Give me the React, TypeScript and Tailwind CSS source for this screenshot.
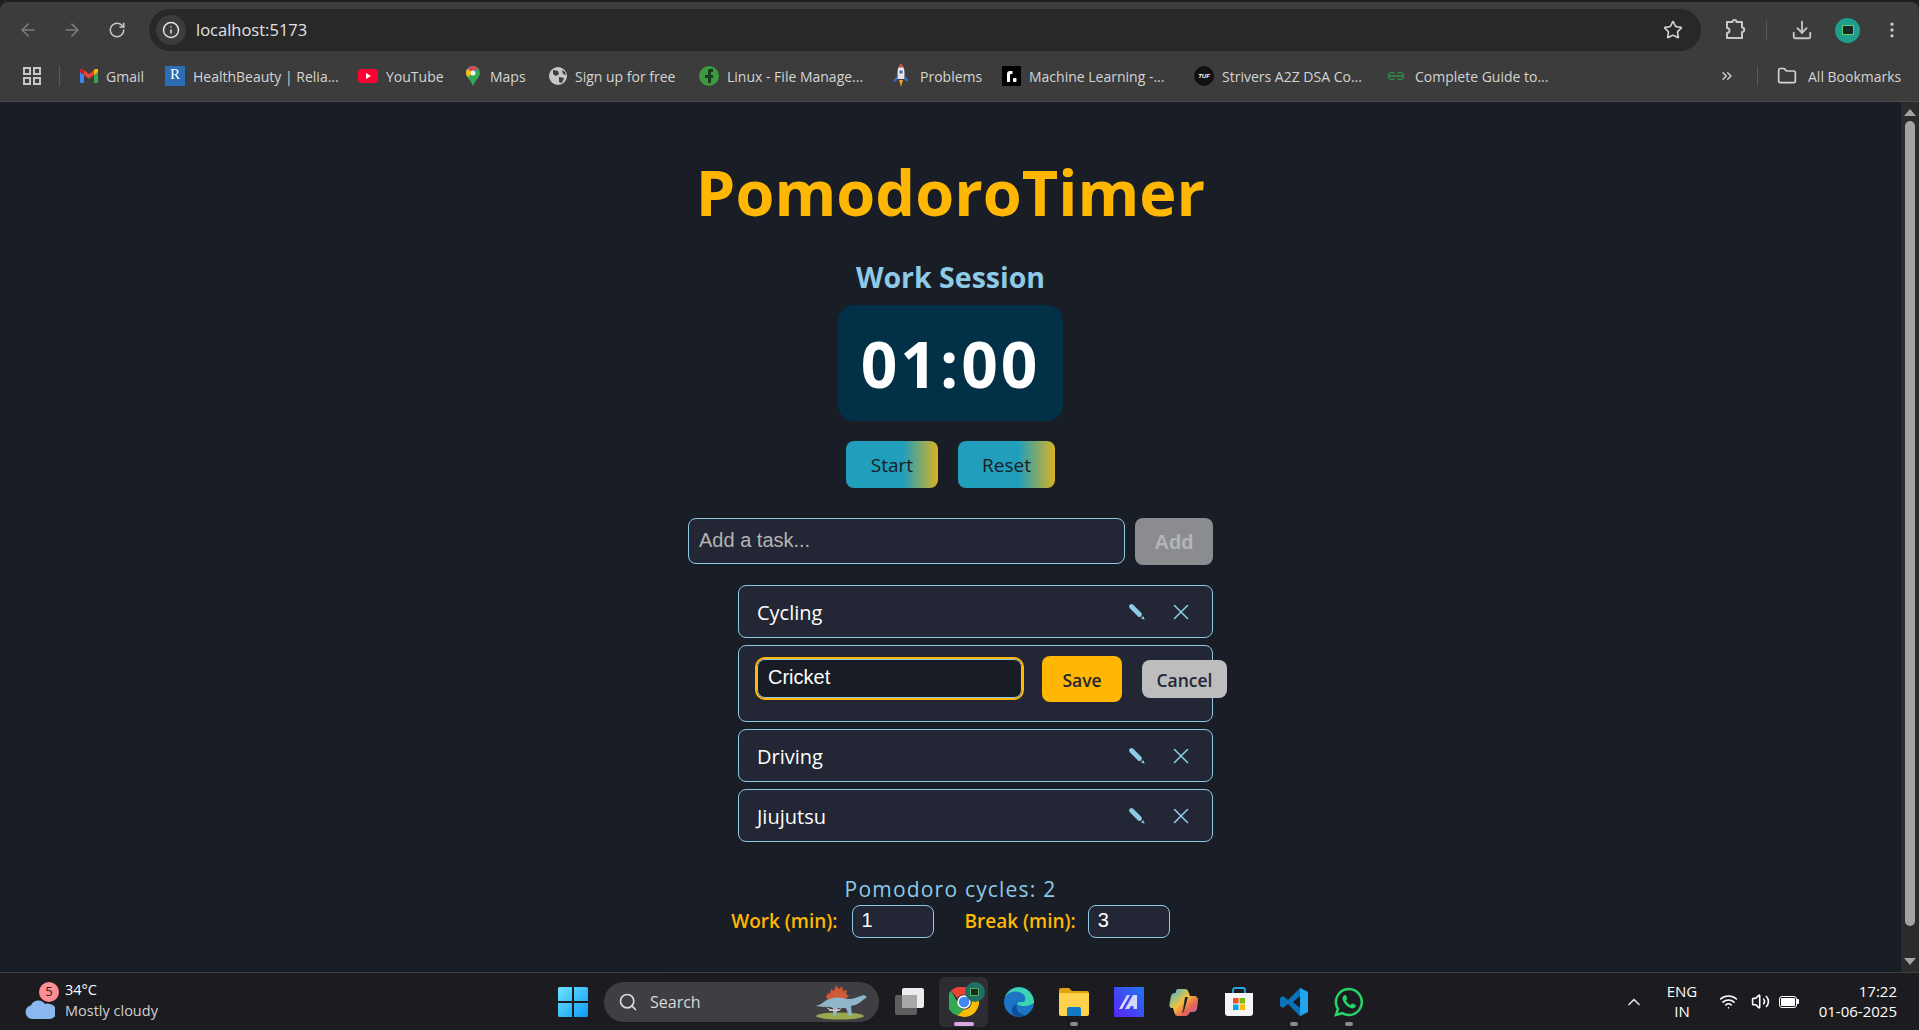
import { ArrowLeft, ArrowRight, RotateCw, Info, Star, Download, MoreVertical, ChevronsRight, Folder, Search, ChevronUp, Wifi, Volume2, X } from "lucide-react";

const ui = "font-['Open_Sans',sans-serif]";

const GmailIcon = () => (
	<svg width="18" height="14" viewBox="0 0 18 14">
		<path d="M0 3v9.5A1.5 1.5 0 0 0 1.5 14H4V6z" fill="#4285f4" />
		<path d="M14 6v8h2.500A1.500 1.500 0 0 0 18 12.500V3z" fill="#34a853" />
		<path d="M4 6V1L9 5l5-4v5L9 9.800z" fill="#ea4335" />
		<path d="M0 3l4 3V1L2.400 0A1.500 1.500 0 0 0 0 1.500z" fill="#c5221f" />
		<path d="M18 3l-4 3V1l1.600-1A1.500 1.500 0 0 1 18 1.500z" fill="#fbbc04" />
	</svg>
);

const RelianceIcon = () => (
	<div className="w-5 h-5 bg-[#2a6fb5] flex items-start justify-center text-white text-[15px] leading-[16px] font-['Liberation_Serif',serif]">R</div>
);

const YoutubeIcon = () => (
	<svg width="20" height="14" viewBox="0 0 20 14">
		<rect width="20" height="14" rx="3.500" fill="#ff0033" />
		<path d="M8 4l5 3-5 3z" fill="#fff" />
	</svg>
);

const MapsIcon = () => (
	<svg width="14" height="20" viewBox="0 0 14 20">
		<path d="M7 0a7 7 0 0 1 7 7c0 4-4 6-7 13C4 13 0 11 0 7a7 7 0 0 1 7-7z" fill="#34a853" />
		<path d="M7 0a7 7 0 0 1 5.500 2.700L2 11C.6 9.700 0 8.500 0 7a7 7 0 0 1 7-7z" fill="#4285f4" />
		<path d="M1.500 2.700L7 7 2 11C.6 9.700 0 8.500 0 7c0-1.700.6-3.100 1.500-4.300z" fill="#fbbc04" />
		<path d="M7 0a7 7 0 0 0-5.500 2.700L5 5.500l7.500-2.800A7 7 0 0 0 7 0z" fill="#ea4335" opacity=".85" />
		<circle cx="7" cy="7" r="2.500" fill="#fff" opacity=".9" />
	</svg>
);

const GlobeIcon = () => (
	<svg width="18" height="18" viewBox="0 0 18 18">
		<circle cx="9" cy="9" r="9" fill="#c7c7c7" />
		<path d="M4 3l5 1 1 3-3 2-3-2zM10 10l5 1-2 5-3-1zM13 3l3 2 1 3-3-1z" fill="#3c3c3c" />
	</svg>
);

const LinuxIcon = () => (
	<svg width="20" height="20" viewBox="0 0 20 20">
		<circle cx="10" cy="10" r="10" fill="#3d9a41" />
		<path d="M10 3h4v3h-2v3h2v3h-2v5H9v-5H6V9h3V5a2 2 0 0 1 1-2z" fill="#1c3a1e" />
	</svg>
);

const RocketIcon = () => (
	<svg width="14" height="24" viewBox="0 0 14 24">
		<path d="M7 0c3 3 3.500 6 3.500 9v6h-7V9C3.500 6 4 3 7 0z" fill="#e6e6e6" />
		<path d="M7 0c1 1 1.800 2.200 2.400 3.500H4.600C5.200 2.200 6 1 7 0z" fill="#d9412f" />
		<circle cx="7" cy="8" r="1.800" fill="#3b6fc4" />
		<path d="M3.500 11L0 16v2l3.500-2zM10.500 11L14 16v2l-3.500-2z" fill="#3b6fc4" />
		<path d="M5 16h4l-2 7z" fill="#f59a23" />
	</svg>
);

const MlIcon = () => (
	<div className="w-[19px] h-5 bg-black flex items-center justify-center">
		<svg width="11" height="12" viewBox="0 0 11 12">
			<path d="M1 12V4q0-3 3-3h2.500v3H5q-1 0-1 1v7z" fill="#fff" />
			<rect x="7" y="8" width="3.500" height="4" rx="1" fill="#fff" />
		</svg>
	</div>
);

const TufIcon = () => (
	<div className="w-5 h-5 rounded-full bg-[#111] flex items-center justify-center text-white text-[6px] font-bold italic font-['Liberation_Sans',sans-serif]">TUF</div>
);

const GfgIcon = () => (
	<svg width="18" height="10" viewBox="0 0 18 10" fill="none" stroke="#2f8d46" strokeWidth="1.400">
		<path d="M9 5H1.500a3.500 3.500 0 0 1 6-2.500M9 5h7.500a3.500 3.500 0 0 0-6-2.500" />
		<path d="M1.500 5a3.500 3.500 0 0 0 6 2.500M16.500 5a3.500 3.500 0 0 1-6 2.500" />
	</svg>
);

const AppsIcon = () => (
	<svg width="18" height="18" viewBox="0 0 18 18" fill="none" stroke="#c7c7c7" strokeWidth="2">
		<rect x="1" y="1" width="6" height="6" />
		<rect x="11" y="1" width="6" height="6" />
		<rect x="1" y="11" width="6" height="6" />
		<rect x="11" y="11" width="6" height="6" />
	</svg>
);

const PuzzleIcon = () => (
	<svg width="22" height="22" viewBox="0 0 22 22" fill="none" stroke="#c7c7c7" strokeWidth="2" strokeLinejoin="round">
		<path d="M3 3h5.500a2 2 0 0 1 4 0H18v5.500a2.200 2.200 0 0 1 0 4.400V19H3v-5a2.500 2.500 0 0 0 0-5z" />
	</svg>
);

const bookmarks = [
	{ label: "Gmail", icon: <GmailIcon />, box: "w-[85px]", gap: "gap-2" },
	{ label: "HealthBeauty | Relia...", icon: <RelianceIcon />, box: "w-[193px]", gap: "gap-2" },
	{ label: "YouTube", icon: <YoutubeIcon />, box: "w-[108px]", gap: "gap-2" },
	{ label: "Maps", icon: <MapsIcon />, box: "w-[83px]", gap: "gap-[10px]" },
	{ label: "Sign up for free", icon: <GlobeIcon />, box: "w-[150px]", gap: "gap-2" },
	{ label: "Linux - File Manage...", icon: <LinuxIcon />, box: "w-[195px]", gap: "gap-2" },
	{ label: "Problems", icon: <RocketIcon />, box: "w-[108px]", gap: "gap-3" },
	{ label: "Machine Learning -...", icon: <MlIcon />, box: "w-[192px]", gap: "gap-2" },
	{ label: "Strivers A2Z DSA Co...", icon: <TufIcon />, box: "w-[193px]", gap: "gap-2" },
	{ label: "Complete Guide to...", icon: <GfgIcon />, box: "w-[170px]", gap: "gap-[10px]" },
];

const BrowserChrome = () => (
	<div className={`${ui} h-[102px] shrink-0 bg-[#1f1f1f] pt-[2px]`}>
		<div className="h-[100px] bg-[#3c3c3c] rounded-t-[8px] border-b border-[#4a4a4a]">
			<div className="h-[52px] flex items-center pt-[4px] text-[#c7c7c7]">
				<ArrowLeft size={20} className="ml-[18px] text-[#7a7a7a]" />
				<ArrowRight size={20} className="ml-[24px] text-[#7a7a7a]" />
				<RotateCw size={18} className="ml-[26px]" />
				<div className="ml-[23px] w-[1552px] h-[42px] rounded-full bg-[#282828] flex items-center pl-[7px]">
					<div className="w-[30px] h-[30px] rounded-full bg-[#3c3c3c] flex items-center justify-center">
						<Info size={18} className="text-[#e3e3e3]" />
					</div>
					<span className="ml-[10px] text-[16.500px] text-[#e3e3e3]">localhost:5173</span>
					<Star size={20} className="ml-auto mr-[18px] text-[#d0d0d0]" />
				</div>
				<div className="ml-[23px]"><PuzzleIcon /></div>
				<div className="ml-[20px] w-[1px] h-5 bg-[#5a5a5a]" />
				<Download size={22} className="ml-[24px]" />
				<div className="ml-[22px] w-[25px] h-[25px] rounded-full bg-[#1f9e8d] flex items-center justify-center">
					<div className="w-[12px] h-[10px] bg-[#1b2a26] border border-[#5fcf6a]" />
				</div>
				<MoreVertical size={20} className="ml-[22px]" />
			</div>
			<div className="h-[44px] flex items-center text-[14px] text-[#d4d4d4]">
				<div className="ml-[23px]"><AppsIcon /></div>
				<div className="ml-[18px] mr-[20px] w-[1px] h-5 bg-[#5a5a5a]" />
				{bookmarks.map((b) => (
					<div key={b.label} className={`${b.box} ${b.gap} flex items-center shrink-0 whitespace-nowrap`}>
						{b.icon}
						<span>{b.label}</span>
					</div>
				))}
				<ChevronsRight size={16} className="ml-[162px] text-[#d4d4d4]" />
				<div className="ml-[22px] w-[1px] h-5 bg-[#5a5a5a]" />
				<Folder size={20} className="ml-[19px]" />
				<span className="ml-[11px] whitespace-nowrap">All Bookmarks</span>
			</div>
		</div>
	</div>
);

const PencilGlyph = () => (
	<svg width="18" height="18" viewBox="0 0 18 18" className="shrink-0">
		<path d="M3.500 3.500L11.500 11.500" stroke="#8ecae6" strokeWidth="4.800" strokeLinecap="round" fill="none" />
		<path d="M13 15.200l2.200-2.200 1.500 3.700z" fill="#8ecae6" />
	</svg>
);

const TaskRow = ({ name }: { name: string }) => (
	<li className="flex items-center h-[53px] rounded-[8px] border border-[#8ecae6] bg-[#232735] pl-[18px] pr-[18px]">
		<span className="pt-[2px] text-[20px] text-white flex-1">{name}</span>
		<PencilGlyph />
		<X size={26} strokeWidth={1.400} className="ml-[22px] text-[#8ecae6]" />
	</li>
);

const EditRow = () => (
	<li className="flex items-start h-[77px] rounded-[8px] border border-[#8ecae6] bg-[#232735] pl-[18px] pt-[10px]">
		<input
			readOnly
			value="Cricket"
			className="mt-[3px] shrink-0 w-[265px] h-[39px] rounded-[8px] bg-[#181c25] border border-[#8ecae6] outline-2 outline-[#ffb703] px-[10px] pb-[2px] text-[20px] text-white font-['Liberation_Sans',sans-serif]"
		/>
		<button className="ml-[20px] pt-[2px] shrink-0 w-[80px] h-[46px] rounded-[8px] bg-[#ffb703] text-[#232735] text-[17.5px] font-semibold">Save</button>
		<button className="ml-[20px] mt-[4px] pt-[2px] shrink-0 w-[85px] h-[38px] rounded-[8px] bg-[#bdbdbd] text-[#232735] text-[17.5px] font-semibold">Cancel</button>
	</li>
);

const PomodoroPage = () => (
	<div className={`${ui} w-[588px] mx-auto h-full bg-[#191d26] flex flex-col items-center overflow-hidden`}>
		<h1 className="mt-[58px] text-[63px] leading-none font-bold text-[#ffb703] whitespace-nowrap">PomodoroTimer</h1>
		<h2 className="mt-[34px] text-[28.500px] leading-[40px] font-bold text-[#8ecae6]">Work Session</h2>
		<div className="mt-[8px] pt-[2px] w-[225px] h-[116px] rounded-[16px] bg-[#023047] flex items-center justify-center text-[64px] font-bold text-white tracking-[3px]">01:00</div>
		<div className="mt-[20px] flex gap-[20px]">
			<button className="pt-[2px] w-[92px] h-[47px] rounded-[8px] bg-[linear-gradient(90deg,#219ebc_62%,#ffb703_108%)] text-[#181c25] text-[19px] font-medium">Start</button>
			<button className="pt-[2px] w-[97px] h-[47px] rounded-[8px] bg-[linear-gradient(90deg,#219ebc_62%,#ffb703_108%)] text-[#181c25] text-[19px] font-medium">Reset</button>
		</div>
		<div className="mt-[30px] w-[525px] flex gap-[10px]">
			<input
				readOnly
				placeholder="Add a task..."
				className="flex-1 h-[46px] rounded-[8px] border border-[#8ecae6] bg-[#232735] px-[10px] pb-[1px] text-[20px] placeholder:text-[#b4b4b4] font-['Liberation_Sans',sans-serif]"
			/>
			<button className="w-[78px] h-[47px] rounded-[8px] bg-[#8b8c90] text-[#b4b5b8] text-[20px] font-bold font-['Liberation_Sans',sans-serif]">Add</button>
		</div>
		<ul className="mt-[20px] w-[525px] pl-[50px] flex flex-col gap-[7px]">
			<TaskRow name="Cycling" />
			<EditRow />
			<TaskRow name="Driving" />
			<TaskRow name="Jiujutsu" />
		</ul>
		<p className="mt-[34px] text-[21px] leading-[26px] tracking-[1.200px] text-[#8ecae6]">Pomodoro cycles: 2</p>
		<div className="mt-[3px] flex items-center text-[19px] font-semibold text-[#ffb703]">
			<label>Work (min):</label>
			<input readOnly value="1" className="ml-[14px] w-[82px] h-[33px] rounded-[8px] border border-[#8ecae6] bg-[#232735] px-[9px] pb-[2px] text-[20px] font-normal text-white font-['Liberation_Sans',sans-serif]" />
			<label className="ml-[31px]">Break (min):</label>
			<input readOnly value="3" className="ml-[12px] w-[82px] h-[33px] rounded-[8px] border border-[#8ecae6] bg-[#232735] px-[9px] pb-[2px] text-[20px] font-normal text-white font-['Liberation_Sans',sans-serif]" />
		</div>
	</div>
);

const Scrollbar = () => (
	<div className="w-[18px] shrink-0 bg-[#2b2b2b] flex flex-col items-center py-[7px]">
		<div className="w-0 h-0 border-x-[6px] border-x-transparent border-b-[7px] border-b-[#a3a3a3]" />
		<div className="mt-[5px] w-[10px] flex-1 rounded-full bg-[#a3a3a3] mb-[32px]" />
		<div className="w-0 h-0 border-x-[6px] border-x-transparent border-t-[7px] border-t-[#a3a3a3]" />
	</div>
);

const WindowsIcon = () => (
	<svg width="30" height="30" viewBox="0 0 30 30">
		<defs>
			<linearGradient id="win" x1="0" y1="0" x2="1" y2="1">
				<stop offset="0" stopColor="#6fe3ff" />
				<stop offset="1" stopColor="#0a9bf5" />
			</linearGradient>
		</defs>
		<path d="M0 1.500A1.500 1.500 0 0 1 1.500 0H14v14H0zM16 0h12.500A1.500 1.500 0 0 1 30 1.500V14H16zM0 16h14v14H1.500A1.500 1.500 0 0 1 0 28.500zM16 16h14v12.500a1.500 1.500 0 0 1-1.500 1.500H16z" fill="url(#win)" />
	</svg>
);

const DinoIcon = () => (
	<svg width="60" height="36" viewBox="0 0 60 36">
		<ellipse cx="28" cy="32" rx="24" ry="3.500" fill="#9aa84e" />
		<path d="M14 13l2-4 2 1 1-5 3 2 2-6 3 4 3-3 1 5 4-1-1 4 3 2-5 4H16z" fill="#cf5a34" />
		<path d="M4 22q5-1 9-5 8-5 18-3 7 2 12 0l9-3 3 2-4 3q-5 5-12 6l1 10h-3l-3-8-8 0-2 8h-3l0-8q-5-2-9-1z" fill="#8fb5c9" />
		<path d="M14 23q8 5 16 1l-3 3h-9z" fill="#e6c3cf" />
	</svg>
);

const TaskViewIcon = () => (
	<svg width="30" height="30" viewBox="0 0 30 30">
		<rect x="1" y="8" width="22" height="20" rx="2" fill="#5e5e5e" />
		<rect x="8" y="1" width="22" height="20" rx="2" fill="#ececec" />
		<rect x="8" y="8" width="15" height="13" rx="1" fill="#a8a8a8" />
	</svg>
);

const ChromeIcon = () => (
	<div className="relative w-[30px] h-[30px]">
		<svg width="30" height="30" viewBox="0 0 30 30">
			<path d="M15 0a15 15 0 0 1 13 7.500H15a7.500 7.500 0 0 0-6.500 3.750L2 3.800A15 15 0 0 1 15 0z" fill="#ea4335" />
			<path d="M2 3.800l6.500 11.200A7.500 7.500 0 0 0 15 22.500L8.500 28.600A15 15 0 0 1 2 3.800z" fill="#34a853" />
			<path d="M28 7.500A15 15 0 0 1 15 30l-6.500-1.400L15 22.500A7.500 7.500 0 0 0 21.500 11z" fill="#fbbc04" />
			<circle cx="15" cy="15" r="6" fill="#4285f4" stroke="#fff" strokeWidth="1.500" />
		</svg>
		<div className="absolute -top-[5px] -right-[6px] w-[20px] h-[20px] rounded-full bg-[#1f6f68] flex items-center justify-center">
			<div className="w-[9px] h-[8px] bg-[#1b2a26] border border-[#4caf50]" />
		</div>
	</div>
);

const EdgeIcon = () => (
	<svg width="30" height="30" viewBox="0 0 30 30">
		<circle cx="15" cy="15" r="15" fill="#1b74c4" />
		<path d="M30 16A15 15 0 0 0 1 10C5 4 14 3 19 7c3 2.500 3 6 1 8-3 0-6-.5-7 2 3 3 12 3 17-1z" fill="#3dd4b0" />
		<path d="M13 17c-2 5 2 10 8 11a15 15 0 0 1-6 2C9 30 6 23 9 19c1-1 3-2 4-2z" fill="#0d4f99" />
	</svg>
);

const FilesIcon = () => (
	<svg width="30" height="28" viewBox="0 0 30 28">
		<path d="M0 2a2 2 0 0 1 2-2h8l3 3h15a2 2 0 0 1 2 2v3H0z" fill="#e0a30e" />
		<path d="M0 5h30v21a2 2 0 0 1-2 2H2a2 2 0 0 1-2-2z" fill="#ffd24d" />
		<path d="M8 21a2 2 0 0 1 2-2h10a2 2 0 0 1 2 2v7H8z" fill="#0f7bc8" />
	</svg>
);

const MIcon = () => (
	<svg width="30" height="30" viewBox="0 0 30 30">
		<defs>
			<linearGradient id="mbg" x1="0" y1="1" x2="1" y2="0">
				<stop offset="0" stopColor="#5a22f5" />
				<stop offset="1" stopColor="#1e78f0" />
			</linearGradient>
		</defs>
		<rect width="30" height="30" fill="url(#mbg)" />
		<path d="M5 22L13 8h3L8 22zM11 22L19 8h4v14h-3.500v-3H17l-2 3z" fill="#d6d9ff" />
	</svg>
);

const CopilotIcon = () => (
	<svg width="30" height="30" viewBox="0 0 30 30">
		<defs>
			<linearGradient id="cop" x1="0" y1="0" x2="1" y2="1">
				<stop offset="0" stopColor="#2fb5e8" />
				<stop offset=".45" stopColor="#f2c23e" />
				<stop offset=".7" stopColor="#e8664f" />
				<stop offset="1" stopColor="#b45ee0" />
			</linearGradient>
		</defs>
		<path d="M9 2h7c2 0 3 1 3.500 3L21 9h4c3 0 4.500 2 4 5l-1 8c-.5 2-2 3-4 3h-3l-1 2c-1 1-2 2-4 2H9c-2 0-3-1-3.500-3L4 21H3c-2 0-3-2-2.500-4l1.500-8c.5-2 2-3 4-3h.5L7 4c.3-1 1-2 2-2z" fill="url(#cop)" />
		<path d="M16 10h3l-4 14c-.5 1-1 2-2 2l1-3z" fill="#26262c" />
	</svg>
);

const StoreIcon = () => (
	<svg width="30" height="30" viewBox="0 0 30 30">
		<path d="M9 7V3a2 2 0 0 1 2-2h8a2 2 0 0 1 2 2v4" fill="none" stroke="#2aa8e0" strokeWidth="1.800" />
		<path d="M1 6h28v20a3 3 0 0 1-3 3H4a3 3 0 0 1-3-3z" fill="#f5f5f5" />
		<rect x="9" y="11" width="5.500" height="5.500" fill="#f25022" />
		<rect x="15.500" y="11" width="5.500" height="5.500" fill="#7fba00" />
		<rect x="9" y="17.500" width="5.500" height="5.500" fill="#00a4ef" />
		<rect x="15.500" y="17.500" width="5.500" height="5.500" fill="#ffb900" />
	</svg>
);

const VscodeIcon = () => (
	<svg width="30" height="30" viewBox="0 0 30 30">
		<path d="M21 1l8 4v20l-8 4-12-12-5 4-3-2v-8l3-2 5 4z" fill="#0a72b8" />
		<path d="M21 1l8 4v20l-8 4z" fill="#23a3ec" />
		<path d="M21 9l-7 6 7 6z" fill="#1c1c20" />
	</svg>
);

const WhatsappIcon = () => (
	<svg width="30" height="30" viewBox="0 0 30 30">
		<path d="M15 2a13 13 0 0 0-11 20L2 28l6.200-1.800A13 13 0 1 0 15 2z" fill="none" stroke="#25d366" strokeWidth="2.500" />
		<path d="M10 8.500c-1.500 1-2 3-1 5 1.500 3.500 4 6 7.500 7.500 2 .8 4 .3 5-1.200.6-1 .3-1.800-.4-2.100l-2.300-1.100c-.6-.3-1-.1-1.400.4l-.7.9c-2.200-.8-3.900-2.500-4.800-4.700l.9-.8c.5-.4.6-.9.300-1.400l-1-2.300c-.4-.8-1.300-1-2.100-.2z" fill="#25d366" />
	</svg>
);

const dock = [
	{ id: "view", icon: <TaskViewIcon />, mark: "" },
	{ id: "chrome", icon: <ChromeIcon />, mark: "active" },
	{ id: "edge", icon: <EdgeIcon />, mark: "" },
	{ id: "files", icon: <FilesIcon />, mark: "dot" },
	{ id: "m", icon: <MIcon />, mark: "" },
	{ id: "copilot", icon: <CopilotIcon />, mark: "" },
	{ id: "store", icon: <StoreIcon />, mark: "" },
	{ id: "vscode", icon: <VscodeIcon />, mark: "dot" },
	{ id: "whatsapp", icon: <WhatsappIcon />, mark: "dot" },
];

const Taskbar = () => (
	<div className={`${ui} h-[58px] shrink-0 bg-[#1c1c20] border-t border-[#3f3f42] flex items-center text-white`}>
		<div className="relative ml-[25px] w-[30px] h-[20px] mt-[14px] shrink-0">
			<div className="absolute -top-[17px] left-[14px] w-[20px] h-[20px] rounded-full bg-[#fd8f94] flex items-center justify-center text-[13px] leading-none text-[#222]">5</div>
			<svg width="30" height="20" viewBox="0 0 30 20">
				<path d="M7 20a7 7 0 0 1-1-13.800A8 8 0 0 1 20 5a6 6 0 0 1 5 0 7 7 0 0 1-2 15z" fill="#8ab8ee" />
			</svg>
		</div>
		<div className="ml-[10px] mb-[3px] w-[180px] text-[14.500px] leading-[21px] shrink-0">
			<div>34°C</div>
			<div className="text-[#d0d0d0]">Mostly cloudy</div>
		</div>
		<div className="ml-[313px]"><WindowsIcon /></div>
		<div className="ml-[16px] w-[275px] h-[40px] rounded-full bg-[#3e3e43] flex items-center pl-[14px] shrink-0">
			<Search size={20} className="text-[#dcdcdc]" />
			<span className="ml-[12px] text-[16px] text-[#d8d8d8]">Search</span>
			<div className="ml-auto mr-[7px]"><DinoIcon /></div>
		</div>
		<div className="ml-[2px] flex">
			{dock.map((d) => (
				<div key={d.id} className="relative w-[55px] h-[50px] flex items-center justify-center">
					{d.mark === "active" && <div className="absolute inset-y-0 inset-x-[3px] rounded-[6px] bg-[#2d2d33]" />}
					<div className="relative">{d.icon}</div>
					{d.mark === "active" && <div className="absolute bottom-[1px] w-[20px] h-[4px] rounded-full bg-[#dba6e6]" />}
					{d.mark === "dot" && <div className="absolute bottom-[1px] w-[8px] h-[4px] rounded-full bg-[#8a8a8a]" />}
				</div>
			))}
		</div>
		<ChevronUp size={20} className="ml-[248px] text-[#e0e0e0]" />
		<div className="ml-[18px] mb-[2px] w-[40px] text-center text-[15px] leading-[20px]">
			<div>ENG</div>
			<div>IN</div>
		</div>
		<Wifi size={19} className="ml-[17px]" />
		<Volume2 size={19} className="ml-[13px]" />
		<div className="ml-[9px] flex items-center">
			<div className="w-[18px] h-[12px] rounded-[3px] border border-white p-[1px]">
				<div className="w-full h-full bg-white rounded-[1px]" />
			</div>
			<div className="w-[2px] h-[5px] bg-white rounded-r-[1px]" />
		</div>
		<div className="ml-auto mr-[22px] mb-[2px] text-right text-[15px] leading-[20px]">
			<div>17:22</div>
			<div>01-06-2025</div>
		</div>
	</div>
);

export default function App() {
	return (
		<div className="h-screen flex flex-col overflow-hidden bg-[#181c25]">
			<BrowserChrome />
			<div className="flex-1 min-h-0 flex">
				<div className="flex-1 min-w-0">
					<PomodoroPage />
				</div>
				<Scrollbar />
			</div>
			<Taskbar />
		</div>
	);
}
